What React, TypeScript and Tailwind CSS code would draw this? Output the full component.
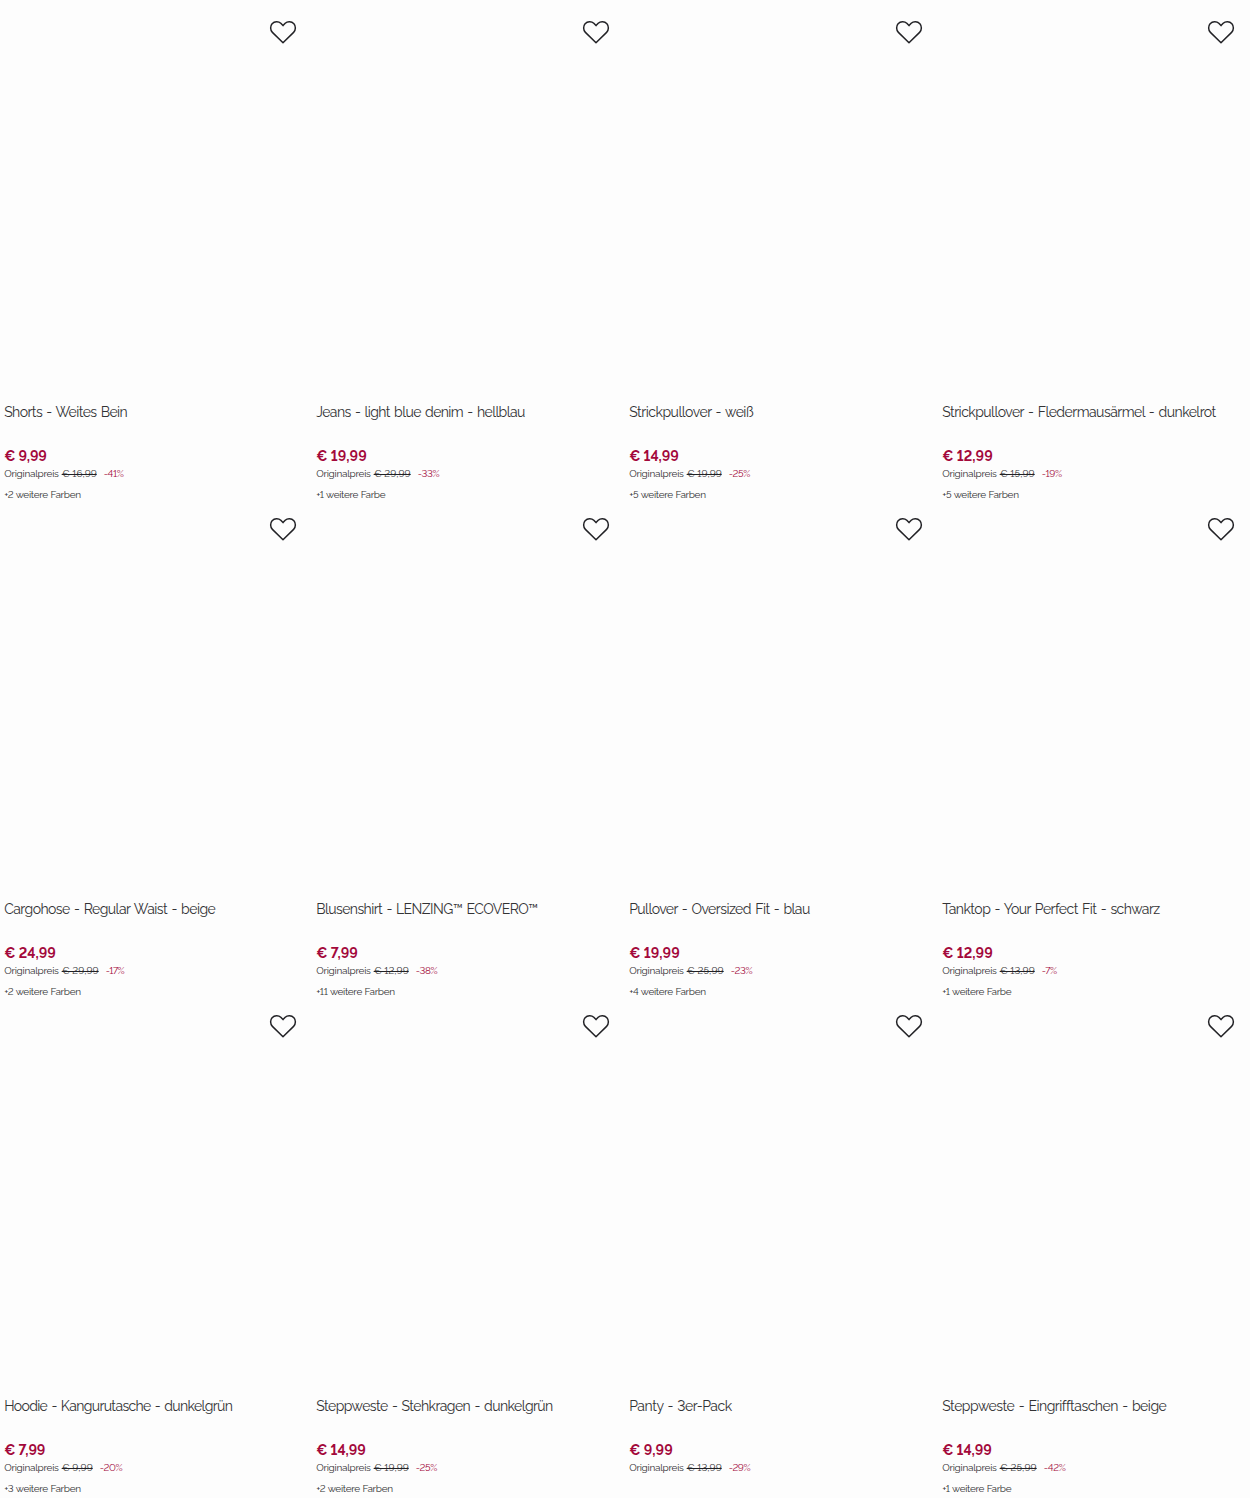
import { useLayoutEffect, useRef, useState } from 'react';

type Item = {
  title: [string, number];
  price: [string, number];
  old: [string, number];
  off: [string, number];
  colors?: [string, number];
};

const items: Item[] = [
  { title: ['Shorts - Weites Bein', 123], price: ['€ 9,99', 42.5], old: ['€ 16,99', 35], off: ['-41%', 20], colors: ['+2 weitere Farben', 76.5] },
  { title: ['Jeans - light blue denim - hellblau', 208.5], price: ['€ 19,99', 50.5], old: ['€ 29,99', 37], off: ['-33%', 21.5], colors: ['+1 weitere Farbe', 69] },
  { title: ['Strickpullover - weiß', 124], price: ['€ 14,99', 49.5], old: ['€ 19,99', 35], off: ['-25%', 21.5], colors: ['+5 weitere Farben', 76.5] },
  { title: ['Strickpullover - Fledermausärmel - dunkelrot', 273.5], price: ['€ 12,99', 50.5], old: ['€ 15,99', 35], off: ['-19%', 20], colors: ['+5 weitere Farben', 76.5] },
  { title: ['Cargohose - Regular Waist - beige', 211], price: ['€ 24,99', 51.5], old: ['€ 29,99', 37], off: ['-17%', 18.5], colors: ['+2 weitere Farben', 76.5] },
  { title: ['Blusenshirt - LENZING™ ECOVERO™', 221.5], price: ['€ 7,99', 41.5], old: ['€ 12,99', 35], off: ['-38%', 21.5], colors: ['+11 weitere Farben', 78.5] },
  { title: ['Pullover - Oversized Fit - blau', 180.5], price: ['€ 19,99', 50.5], old: ['€ 25,99', 37], off: ['-23%', 21.5], colors: ['+4 weitere Farben', 76.5] },
  { title: ['Tanktop - Your Perfect Fit - schwarz', 217.5], price: ['€ 12,99', 50.5], old: ['€ 13,99', 35], off: ['-7%', 15], colors: ['+1 weitere Farbe', 69] },
  { title: ['Hoodie - Kangurutasche - dunkelgrün', 228], price: ['€ 7,99', 41], old: ['€ 9,99', 31], off: ['-20%', 22.5], colors: ['+3 weitere Farben', 76.5] },
  { title: ['Steppweste - Stehkragen - dunkelgrün', 236.5], price: ['€ 14,99', 49.5], old: ['€ 19,99', 35], off: ['-25%', 21.5], colors: ['+2 weitere Farben', 76.5] },
  { title: ['Panty - 3er-Pack', 102.5], price: ['€ 9,99', 43.5], old: ['€ 13,99', 35], off: ['-29%', 21.5] },
  { title: ['Steppweste - Eingrifftaschen - beige', 223], price: ['€ 14,99', 49.5], old: ['€ 25,99', 37], off: ['-42%', 22], colors: ['+1 weitere Farbe', 69] },
];

/** Text whose tracking is adjusted so that it is exactly `width` pixels wide. */
function Tracked({ text, width, className = '' }: { text: string; width: number; className?: string }) {
  const ref = useRef<HTMLSpanElement>(null);
  const [spacing, setSpacing] = useState(0);
  useLayoutEffect(() => {
    if (!ref.current) return;
    ref.current.style.letterSpacing = '0px';
    const natural = ref.current.getBoundingClientRect().width;
    const next = (width - natural) / text.length;
    ref.current.style.letterSpacing = `${next}px`;
    setSpacing(next);
  }, [text, width]);
  return (
    <span ref={ref} className={`inline-block whitespace-nowrap ${className}`} style={{ letterSpacing: `${spacing}px` }}>
      {text}
    </span>
  );
}

function Heart() {
  return (
    <svg viewBox="0 0 28 24" className="h-6 w-7" fill="none" stroke="#222226" strokeWidth="1.5" strokeLinejoin="round">
      <path d="M14 22.7 3.4 12.4C1.1 10.2 1.1 5.9 3.1 3.7 5.5 1.2 9.5 1.1 11.8 3.3L14 5.6l2.2-2.3c2.3-2.2 6.3-2.1 8.7.4 2 2.2 2 6.5-.3 8.7Z" />
    </svg>
  );
}

function Product({ item }: { item: Item }) {
  return (
    <article className="h-[497px] pl-[4.2px]">
      <div className="flex h-[402px] justify-end pr-[15px] pt-5">
        <button type="button" aria-label="Merken" className="-ml-px h-6 w-7">
          <Heart />
        </button>
      </div>
      <h2 className="h-11 text-sm leading-5 text-[#333335] [word-spacing:1.25px]">
        <Tracked text={item.title[0]} width={item.title[1]} />
      </h2>
      <p className="h-5 text-sm font-bold leading-5 text-[#a3093b]">
        <Tracked text={item.price[0]} width={item.price[1]} />
      </p>
      <p className="flex h-4 text-[10px] leading-4 text-[#333335]">
        <Tracked text="Originalpreis" width={54.5} />
        <Tracked text={item.old[0]} width={item.old[1]} className="ml-[3px] line-through decoration-[#222226]" />
        <Tracked text={item.off[0]} width={item.off[1]} className="ml-[7px] text-[#a3093b]" />
      </p>
      {item.colors && (
        <p className="mt-[5px] h-4 text-[10px] leading-4 text-[#333335] [word-spacing:0.5px]">
          <Tracked text={item.colors[0]} width={item.colors[1]} />
        </p>
      )}
    </article>
  );
}

export default function App() {
  return (
    <main className="grid h-[1498px] grid-cols-[312px_313px_313px_312px] content-start overflow-hidden bg-[#fdfdfd] font-['Raleway','Lato',sans-serif] lining-nums">
      {items.map((item) => (
        <Product key={item.title[0]} item={item} />
      ))}
    </main>
  );
}
